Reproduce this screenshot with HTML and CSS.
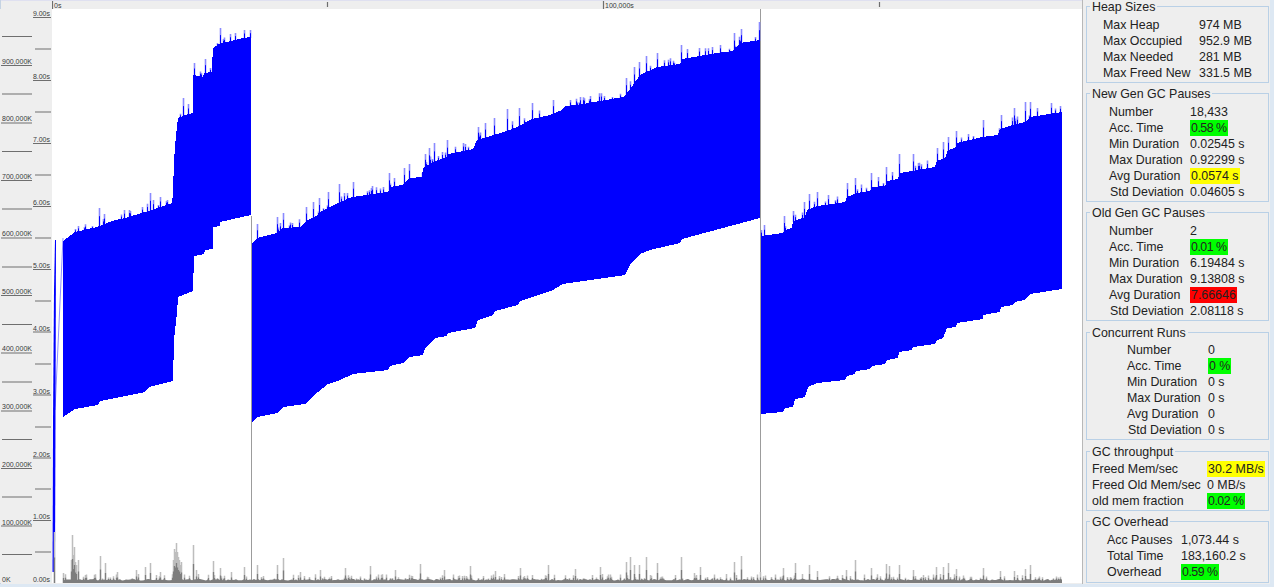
FILE: index.html
```html
<!DOCTYPE html>
<html lang="en">
<head>
<meta charset="utf-8">
<title>GC Log Viewer</title>
<link rel="stylesheet" href="styles.css">
</head>
<body>
<div class="app">
  <main class="main">
    <div class="corner"></div>
    <svg class="ruler" viewBox="52 0 1030 9" width="1030" height="9">
      <path class="ruler-edge" d="M52 0.500H1082"/>
      <path class="tick" d="M52.5 1V9M327.5 2V7M603.5 1V9M879.5 2V7"/>
      <text class="axis-text" x="54" y="7.5">0s</text>
      <text class="axis-text" x="605" y="7.5">100,000s</text>
    </svg>
    <svg class="axis" viewBox="0 9 52 574" width="52" height="574">
      <path class="tick" d="M1 65.5H32M1 123H32M1 180.5H32M1 238H32M1 295.5H32M1 353H32M1 411H32M1 468.500H32M1 526H32"/>
      <path class="tick" d="M2 36.500H32M2 94H32M2 151.500H32M2 209H32M2 267H32M2 324.500H32M2 382H32M2 439.500H32M2 497H32M2 554.500H32"/>
      <path class="tick" d="M33 17.500H51M33 80.500H51M33 143.500H51M33 206.500H51M33 269.500H51M33 332H51M33 395H51M33 458H51M33 520.500H51"/>
      <path class="tick" d="M35 49H51M35 112H51M35 175H51M35 238H51M35 301H51M35 364H51M35 427H51M35 489H51M35 552H51"/>
      <text class="axis-text" x="2" y="63.500">900,000K</text>
      <text class="axis-text" x="2" y="121">800,000K</text>
      <text class="axis-text" x="2" y="178.500">700,000K</text>
      <text class="axis-text" x="2" y="236">600,000K</text>
      <text class="axis-text" x="2" y="293.500">500,000K</text>
      <text class="axis-text" x="2" y="351">400,000K</text>
      <text class="axis-text" x="2" y="409">300,000K</text>
      <text class="axis-text" x="2" y="466.500">200,000K</text>
      <text class="axis-text" x="2" y="524.500">100,000K</text>
      <text class="axis-text" x="2" y="582">0K</text>
      <text class="axis-text end" x="50" y="16">9.00s</text>
      <text class="axis-text end" x="50" y="79">8.00s</text>
      <text class="axis-text end" x="50" y="142">7.00s</text>
      <text class="axis-text end" x="50" y="205">6.00s</text>
      <text class="axis-text end" x="50" y="268">5.00s</text>
      <text class="axis-text end" x="50" y="330.500">4.00s</text>
      <text class="axis-text end" x="50" y="393.500">3.00s</text>
      <text class="axis-text end" x="50" y="456.500">2.00s</text>
      <text class="axis-text end" x="50" y="519">1.00s</text>
      <text class="axis-text end" x="50" y="582">0.00s</text>
    </svg>
    <svg class="plot" viewBox="52 9 1030 574" width="1030" height="574">
      <path class="divider" d="M251.500 216V583M760.500 9V583"/>
      <path class="ramp-light" d="M63 238L55 410"/>
      <path class="ramp" d="M52.500 572L53 420L54 290L55 240L56 240L55.500 420L55 572Z"/>
      <path id="spike-light" class="spike-light"/>
      <path id="spike-dark" class="spike-dark"/>
      <path id="heap" class="heap-fill"/>
      <path id="pause-light" class="pause-light"/>
      <path id="pause-dark" class="pause-dark"/>
      <path id="pause-base" class="pause-base"/>
    </svg>
  </main>
  <aside class="panel">
    <section class="group">
      <h3 class="title">Heap Sizes</h3>
      <div class="grid heap-grid">
        <span>Max Heap</span><span>974 MB</span>
        <span>Max Occupied</span><span>952.9 MB</span>
        <span>Max Needed</span><span>281 MB</span>
        <span>Max Freed New</span><span>331.5 MB</span>
      </div>
    </section>
    <section class="group">
      <h3 class="title">New Gen GC Pauses</h3>
      <div class="grid pause-grid">
        <span>Number</span><span>18,433</span>
        <span>Acc. Time</span><span class="good tight">0.58 %</span>
        <span>Min Duration</span><span>0.02545 s</span>
        <span>Max Duration</span><span>0.92299 s</span>
        <span>Avg Duration</span><span class="warn">0.0574 s</span>
        <span class="std">Std Deviation</span><span>0.04605 s</span>
      </div>
    </section>
    <section class="group">
      <h3 class="title">Old Gen GC Pauses</h3>
      <div class="grid pause-grid">
        <span>Number</span><span>2</span>
        <span>Acc. Time</span><span class="good tight">0.01 %</span>
        <span>Min Duration</span><span>6.19484 s</span>
        <span>Max Duration</span><span>9.13808 s</span>
        <span>Avg Duration</span><span class="bad">7.66646</span>
        <span class="std">Std Deviation</span><span>2.08118 s</span>
      </div>
    </section>
    <section class="group spaced">
      <h3 class="title">Concurrent Runs</h3>
      <div class="grid conc-grid">
        <span>Number</span><span>0</span>
        <span>Acc. Time</span><span class="good">0 %</span>
        <span>Min Duration</span><span>0 s</span>
        <span>Max Duration</span><span>0 s</span>
        <span>Avg Duration</span><span>0</span>
        <span class="std">Std Deviation</span><span>0 s</span>
      </div>
    </section>
    <section class="group spaced">
      <h3 class="title">GC throughput</h3>
      <div class="grid thr-grid">
        <span>Freed Mem/sec</span><span class="warn">30.2 MB/s</span>
        <span>Freed Old Mem/sec</span><span>0 MB/s</span>
        <span>old mem fraction</span><span class="good tight">0.02 %</span>
      </div>
    </section>
    <section class="group last">
      <h3 class="title">GC Overhead</h3>
      <div class="grid over-grid">
        <span>Acc Pauses</span><span>1,073.44 s</span>
        <span>Total Time</span><span>183,160.2 s</span>
        <span>Overhead</span><span class="good tight">0.59 %</span>
      </div>
    </section>
  </aside>
</div>
<script src="chart.js"></script>
</body>
</html>
```
FILE: styles.css
```css
* { box-sizing: border-box; }
html, body { margin: 0; height: 100%; overflow: hidden; }
body {
  background: #dde8f3;
  font-family: "Liberation Sans", Arial, sans-serif;
  font-size: 12.4px;
  color: #222222;
}
.app {
  display: flex;
  height: 584px;
  width: 1270px;
  background: #eeeeee;
  border-left: 1px solid #c5d3e3;
}
.main {
  width: 1082px;
  flex: none;
  display: grid;
  grid-template-columns: 51px 1030px;
  grid-template-rows: 9px 574px;
  border-right: 1px solid #b8b8b8;
}
.corner { background: #eeeeee; border-top: 1px solid #dfe0f0; }
svg { display: block; }
.ruler { background: #eeeeee; }
.ruler-edge { stroke: #dfe0f0; stroke-width: 1; fill: none; }
.axis { margin-left: -1px; background: #eeeeee; }
.plot { background: #ffffff; }
.tick { stroke: #6e6e6e; stroke-width: 1.2; fill: none; }
.axis-text { font-size: 7px; fill: #3a3a3a; font-family: "Liberation Sans", Arial, sans-serif; }
.end { text-anchor: end; }
.divider { stroke: #9c9c9c; stroke-width: 1; fill: none; }
.ramp { fill: #0000ff; }
.ramp-light { stroke: #8f8fff; stroke-width: 1; fill: none; }
.heap-fill { fill: #0000ff; shape-rendering: crispEdges; }
.spike-light { stroke: #8a8aff; stroke-width: 1.6; fill: none; }
.spike-dark { stroke: #0000ff; stroke-width: 1; fill: none; }
.pause-light { stroke: #bdbdbd; stroke-width: 1.5; fill: none; }
.pause-dark { stroke: #7d7d7d; stroke-width: 1.3; fill: none; }
.pause-base { fill: #7d7d7d; }

.panel {
  flex: 1;
  display: flex;
  flex-direction: column;
  gap: 10px;
  padding: 6px 0 0 3px;
  width: 187px;
}
.group {
  position: relative;
  width: 183px;
  border: 1px solid #b9d0e6;
  padding: 10px 0 1px;
}
.spaced { margin-top: 1px; padding-top: 9px; padding-bottom: 1px; }
.last { padding-top: 10px; padding-bottom: 2px; }
.title {
  position: absolute;
  top: -7px;
  left: 3px;
  margin: 0;
  padding: 0 2px;
  font: inherit;
  line-height: 14px;
  background: #eeeeee;
  white-space: nowrap;
}
.grid { display: grid; grid-auto-rows: 16px; line-height: 16px; white-space: nowrap; }
.heap-grid { padding-left: 16px; grid-template-columns: 96px 1fr; }
.pause-grid { padding-left: 22px; grid-template-columns: 81px 1fr; }
.conc-grid { padding-left: 40px; grid-template-columns: 81px 1fr; }
.thr-grid { padding-left: 5px; grid-template-columns: 115px 1fr; }
.over-grid { padding-left: 20px; grid-template-columns: 74px 1fr; }
.std { padding-left: 1px; }
.good, .warn, .bad { justify-self: start; padding: 0 1px; }
.good { background: #00ff00; }
.warn { background: #ffff00; }
.bad { background: #ff0000; }
.tight { letter-spacing: -0.5px; }
```
FILE: chart.js
```js
(function () {
  var topEdges = [
    [[63,241],[75,232],[97,227],[112,221],[125,218],[145,212],[172,203],[173,193],[174,160],[176,135],[178,118],[188,114],[193,113],[193,75],[203,77],[204,73],[212,72],[213,42],[213,48],[219,44],[243,38],[251,37]],
    [[252,243],[257,238],[277,233],[283,228],[300,227],[308,220],[318,215],[320,212],[340,202],[352,197],[388,192],[390,187],[402,185],[410,178],[422,177],[423,168],[435,161],[447,157],[448,154],[473,149],[477,140],[487,137],[507,131],[517,127],[532,119],[550,115],[562,110],[565,106],[583,104],[600,101],[623,97],[627,93],[633,85],[640,75],[657,67],[680,64],[682,59],[717,53],[733,51],[740,43],[760,40]],
    [[761,236],[783,233],[785,230],[792,228],[793,221],[805,217],[807,210],[817,206],[845,202],[847,197],[857,193],[870,191],[872,187],[885,186],[887,181],[898,179],[900,173],[935,167],[937,161],[945,158],[948,150],[955,148],[957,143],[982,137],[998,135],[1000,129],[1013,125],[1025,122],[1030,117],[1062,112]]
  ];
  var bottomEdges = [
    [[63,417],[75,409],[98,405],[100,401],[145,392],[149,387],[173,381],[174,340],[177,313],[178,297],[193,291],[194,256],[204,254],[205,250],[213,249],[213,227],[220,226],[220,222],[251,215]],
    [[252,422],[257,417],[277,413],[283,407],[305,404],[318,392],[328,384],[340,380],[353,374],[388,370],[390,366],[403,363],[410,357],[423,355],[425,348],[435,338],[447,336],[448,333],[475,328],[478,320],[493,315],[495,311],[518,305],[520,301],[532,297],[553,290],[563,284],[625,275],[630,265],[640,254],[650,250],[680,243],[682,239],[760,218]],
    [[761,414],[783,412],[785,408],[793,407],[795,399],[805,397],[808,387],[817,383],[845,380],[847,376],[855,374],[856,371],[870,369],[872,366],[885,364],[887,360],[898,358],[899,352],[912,350],[913,347],[935,344],[937,340],[943,338],[947,328],[956,327],[957,323],[983,319],[983,315],[1000,312],[1001,307],[1013,305],[1015,302],[1025,300],[1030,294],[1062,289]]
  ];
  var spikes = [
    [75,229],[78,226],[84,227],[92,226],[99,208],[104,214],[124,210],[129,210],[142,207],[147,204],[150,193],[153,200],[160,197],[166,201],
    [183,98],[188,104],[194,63],[201,73],[205,59],[210,68],[217,43],[220,28],[223,39],[230,34],[235,33],[244,30],[250,30],
    [257,224],[277,217],[283,213],[306,207],[313,202],[319,198],[328,192],[339,184],[347,193],[353,182],[372,186],[389,173],[394,178],[404,168],[409,164],[425,154],[429,148],[434,143],[442,152],[447,140],[463,143],[478,127],[485,123],[494,118],[507,109],[519,108],[532,103],[553,100],[570,100],[580,97],[590,96],[604,96],[612,97],
    [626,78],[634,67],[639,62],[646,56],[657,53],[681,45],[687,49],[699,48],[712,47],[720,45],[734,33],[741,29],[755,37],[759,22],
    [764,225],[784,216],[793,211],[804,202],[809,194],[817,192],[828,195],[847,183],[855,178],[871,173],[878,177],[886,167],[892,172],[899,154],[913,154],[918,163],[937,148],[943,142],[948,137],[956,131],[968,134],[983,120],[1001,115],[1014,108],[1025,102],[1030,102],[1037,108],[1051,103],[1060,106]
  ];
  var pauses = [
    [54,532],[63,573],[71,560],[72,535],[73,555],[74,547],[75,562],[76,565],[78,560],[100,556],[105,563],[117,572],[136,570],[145,567],[150,563],[160,572],
    [173,560],[174,549],[175,552],[176,543],[177,552],[178,557],[179,560],[180,565],[181,562],[193,545],[196,570],[213,561],[220,568],[231,572],[244,567],[257,565],[277,565],[283,558],[300,572],[320,570],[345,568],[370,566],[395,570],[420,564],[444,570],[470,566],[495,571],[520,568],[548,565],[575,569],[600,567],
    [626,562],[630,557],[634,565],[639,565],[646,557],[650,575],[657,563],[681,557],[694,573],[700,567],[726,574],[734,562],[741,556],[760,572],[783,568],[795,563],[802,574],[809,565],[817,571],[846,570],[855,560],[871,568],[886,564],[889,566],[899,565],[913,570],[936,567],[943,567],[948,563],[956,569],[983,568],[1000,571],[1014,571],[1025,569],[1030,565]
  ];

  var seed = 20240611;
  function rnd() {
    seed = (seed * 1664525 + 1013904223) >>> 0;
    return seed / 4294967296;
  }
  function edgeAt(edges, x) {
    for (var s = 0; s < edges.length; s++) {
      var e = edges[s];
      if (x < e[0][0] || x > e[e.length - 1][0]) continue;
      for (var i = 1; i < e.length; i++) {
        if (x <= e[i][0]) {
          var d = e[i][0] - e[i - 1][0];
          var t = d ? (x - e[i - 1][0]) / d : 1;
          return e[i - 1][1] + (e[i][1] - e[i - 1][1]) * t;
        }
      }
    }
    return null;
  }

  var heap = '';
  topEdges.forEach(function (t, i) {
    var b = bottomEdges[i].slice().reverse();
    heap += 'M' + t.concat(b).map(function (p) { return p[0] + ' ' + p[1]; }).join('L') + 'Z';
  });
  document.getElementById('heap').setAttribute('d', heap);

  var light = '', dark = '';
  function addSpike(x, y) {
    var base = edgeAt(topEdges, x);
    if (base === null || y >= base) return;
    var px = Math.round(x) + 0.5;
    var mid = y + (base - y) * 0.45;
    light += 'M' + px + ' ' + y + 'V' + (base + 1).toFixed(1);
    dark += 'M' + px + ' ' + mid.toFixed(1) + 'V' + (base + 1).toFixed(1);
  }
  spikes.forEach(function (s) { addSpike(s[0], s[1]); });
  for (var x = 64; x < 1062; x += 1) {
    if (rnd() < 0.1) {
      var b = edgeAt(topEdges, x);
      if (b !== null) addSpike(x, b - 2 - rnd() * 6);
    }
  }
  document.getElementById('spike-light').setAttribute('d', light);
  document.getElementById('spike-dark').setAttribute('d', dark);

  var pl = '', pd = '';
  pauses.forEach(function (p) {
    var px = Math.round(p[0]) + 0.5;
    var mid = p[1] + (583 - p[1]) * 0.5;
    pl += 'M' + px + ' ' + p[1] + 'V583';
    pd += 'M' + px + ' ' + mid.toFixed(1) + 'V583';
  });
  for (var gx = 64; gx < 1062; gx += 1) {
    if (rnd() < 0.2) {
      var h = 1 + rnd() * 5;
      pl += 'M' + (gx + 0.5) + ' ' + (580 - h).toFixed(1) + 'V583';
      pd += 'M' + (gx + 0.5) + ' ' + (580 - h * 0.4).toFixed(1) + 'V583';
    }
  }
  document.getElementById('pause-light').setAttribute('d', pl);
  document.getElementById('pause-dark').setAttribute('d', pd);

  var base = 'M64 583';
  for (var bx = 64; bx <= 1062; bx += 2) {
    base += 'L' + bx + ' ' + (579 + rnd() * 1.5).toFixed(1);
  }
  base += 'L1062 583Z';
  document.getElementById('pause-base').setAttribute('d', base);
})();
```
